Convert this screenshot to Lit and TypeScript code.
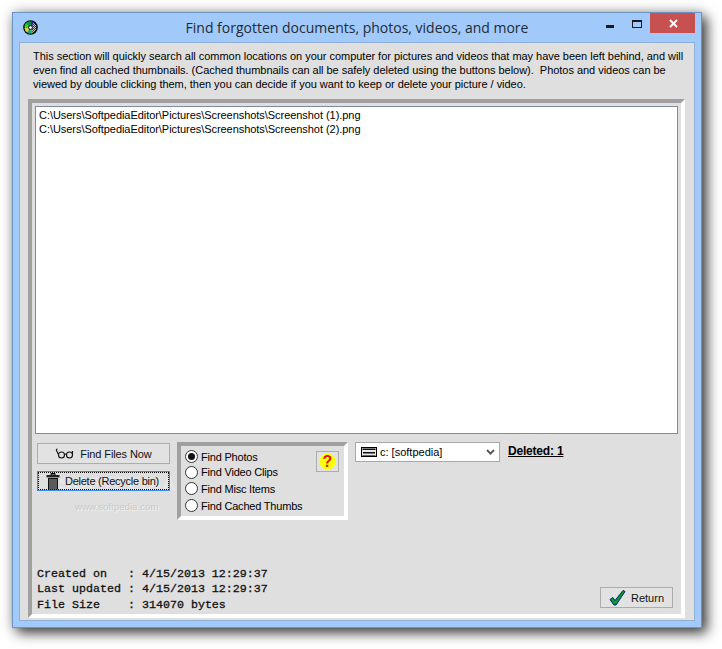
import { LitElement, html, css } from "lit";
import { customElement } from "lit/decorators.js";

const disc = html`<svg class="disc" width="15" height="15" viewBox="0 0 15 15">
  <defs><pattern id="gk" width="2" height="2" patternUnits="userSpaceOnUse">
    <rect width="2" height="2" fill="#c8c8c8"/><rect width="1" height="1" fill="#333"/><rect x="1" y="1" width="1" height="1" fill="#333"/>
  </pattern></defs>
  <circle cx="7.5" cy="7.5" r="6.6" fill="url(#gk)" stroke="#000" stroke-width="1.4"/>
  <path d="M7.5 7.5 L3 2.8 A6 6 0 0 1 8 1.5 Z" fill="#0c9a3c"/>
  <path d="M7.5 7.5 L8 1.5 A6 6 0 0 1 11 2.5 Z" fill="#1830b0"/>
  <path d="M7.5 7.5 L3 2.8 A6 6 0 0 0 1.5 7 Z" fill="#30d030"/>
  <path d="M7.5 7.5 L1.5 8 A6 6 0 0 0 4 12.5 Z" fill="#d8d820"/>
  <path d="M7.5 7.5 L4 12.5 A6 6 0 0 0 8 13.5 Z" fill="#10a890"/>
  <path d="M7.5 7.5 L8 13.5 A6 6 0 0 0 10 13 Z" fill="#30d030"/>
  <circle cx="7.5" cy="7.5" r="1.9" fill="#fff" stroke="#000"/>
</svg>`;

const glasses = html`<svg width="20" height="12" viewBox="0 0 20 12" fill="none" stroke="#111" stroke-width="1.1">
  <circle cx="6.5" cy="7" r="3"/><circle cx="14.5" cy="7" r="3"/>
  <path d="M9.5 6.5 Q10.5 5.5 11.5 6.5"/><path d="M3.5 6.5 L1.5 2.5 Q1 1 2.5 1"/>
  <path d="M17.5 6.5 L17.5 3"/>
</svg>`;

const trash = html`<svg width="14" height="18" viewBox="0 0 14 18">
  <path d="M5 1.5h4v1.5h-4z" fill="none" stroke="#000"/>
  <rect x="0.5" y="3" width="13" height="2.4" fill="#222"/>
  <path d="M2 6h10v11.5h-10z" fill="#111"/>
  <path d="M4 7v10M6 7v10M8 7v10M10 7v10" stroke="#ccc" stroke-width=".8"/>
</svg>`;

const check = html`<svg width="17" height="17" viewBox="0 0 17 17">
  <path d="M1 10.5 L3.8 8.5 L6 11.5 L14 1.5 L16 2.5 L7 16 L5 16 Z" fill="#0a9a28" stroke="#00207a" stroke-width="1"/>
</svg>`;

const drive = html`<svg width="16" height="10" viewBox="0 0 16 10">
  <rect x=".5" y=".5" width="15" height="9" fill="#e8e8e8" stroke="#000"/>
  <rect x="1.5" y="1.5" width="13" height="1.5" fill="#111"/>
  <rect x="2" y="5" width="12" height="1.5" fill="#111"/>
  <rect x="1.5" y="8" width="13" height="1" fill="#666"/>
</svg>`;

const chevron = html`<svg width="9" height="6" viewBox="0 0 9 6" fill="none" stroke="#555" stroke-width="1.8">
  <path d="M1 1 L4.5 4.6 L8 1"/>
</svg>`;

const help = html`<svg width="17" height="17" viewBox="0 0 17 17">
  <defs><pattern id="d" width="2" height="2" patternUnits="userSpaceOnUse">
    <rect width="2" height="2" fill="#ffff00"/><rect width="1" height="1" fill="#ffffa0"/>
  </pattern></defs>
  <circle cx="8.5" cy="8.5" r="8" fill="url(#d)"/>
</svg>`;

@customElement("app-root")
export class AppRoot extends LitElement {
  static styles = css`
    :host {
      display: block;
      width: 722px;
      height: 649px;
      background: #fff;
      overflow: hidden;
      font-family: "Liberation Sans", Arial, sans-serif;
      font-size: 11px;
      color: #000;
    }
    .page { padding: 12px 0 0 12px; }
    .window {
      box-sizing: border-box;
      width: 690px;
      height: 616px;
      background: #a1cafa;
      border: 1px solid #6c93c2;
      box-shadow: 5px 5px 12px rgba(0,0,0,.72), 0 0 12px rgba(0,0,0,.22);
      display: flex;
      flex-direction: column;
    }
    .titlebar {
      height: 28px;
      flex: none;
      display: grid;
      grid-template-columns: 1fr auto 1fr;
    }
    .disc { margin: 7px 0 0 10px; display: block; }
    .title {
      font-family: "Open Sans", sans-serif;
      font-size: 14px;
      line-height: 30px;
      color: #1d2a38;
      white-space: nowrap;
    }
    .controls { display: flex; justify-content: flex-end; padding-right: 6px; }
    .min { width: 8px; height: 3px; background: #1a1a1a; margin: 12px 18px 0 0; }
    .max {
      box-sizing: border-box; width: 10px; height: 8px;
      border: 1px solid #1a1a1a; border-top-width: 2px;
      margin: 7px 8px 0 0;
    }
    .close {
      box-sizing: border-box;
      width: 45px; height: 20px; background: #c75050; color: #fff;
      display: flex; align-items: center; justify-content: center;
      padding: 1px 0 0 1px;
    }
    .client {
      flex: 1;
      margin: 1px 6px 6px 6px;
      background: #dfdfdf;
      border: 1px solid #8fb0d6;
      display: flex;
      flex-direction: column;
      min-height: 0;
    }
    .intro {
      margin: 6px 0 8px 13px;
      line-height: 14px;
      white-space: pre;
      letter-spacing: -0.03px;
    }
    .frame {
      box-sizing: border-box;
      width: 657px;
      height: 519px;
      flex: none;
      margin-left: 8px;
      border: 4px solid;
      border-color: #a0a0a0 #fff #fff #a0a0a0;
      padding: 3px 3px 1px 3px;
      display: flex;
      flex-direction: column;
    }
    .list {
      box-sizing: border-box;
      flex: none;
      height: 328px;
      background: #fff;
      border: 1px solid #7f8a9c;
      padding: 1px 3px;
      line-height: 14px;
      white-space: nowrap;
      letter-spacing: -0.05px;
    }
    .row {
      flex: none;
      display: flex;
      align-items: flex-start;
      margin-top: 8px;
      padding-left: 2px;
    }
    .col {
      position: relative;
      width: 133px;
      margin: 1px 7px 0 0;
      display: flex;
      flex-direction: column;
      gap: 7px;
    }
    .btn {
      box-sizing: border-box;
      height: 21px;
      display: flex;
      align-items: center;
      justify-content: center;
      gap: 5px;
      background: #e2e2e2;
      border: 1px solid #acacac;
      color: #111;
      position: relative;
      z-index: 1;
      letter-spacing: -0.1px;
    }
    .btn.focus {
      height: 20px;
      border-color: #3b8ce0;
      outline: 1px dotted #000;
      outline-offset: -2px;
      background: transparent;
      gap: 5px;
      letter-spacing: -0.25px;
      padding-right: 2px;
    }
    .wm-big {
      position: absolute;
      left: 22px; top: 30px;
      font-size: 19px;
      font-weight: bold;
      color: #e6e6e6;
      letter-spacing: 1px;
      white-space: nowrap;
    }
    .wm-small {
      position: absolute;
      left: 38px; top: 58px;
      font-size: 9.7px;
      color: #c9c9c9;
      text-shadow: 1px 1px 0 #f2f2f2;
      white-space: nowrap;
    }
    .group {
      box-sizing: border-box;
      width: 171px;
      height: 78px;
      border: 4px solid;
      border-color: #a0a0a0 #fff #fff #a0a0a0;
      padding: 3px 0 0 4px;
      margin-right: 7px;
      display: flex;
      justify-content: space-between;
    }
    .radio {
      display: flex; align-items: center; gap: 3px;
      height: 17px; white-space: nowrap;
      letter-spacing: -0.2px;
    }
    .radio.first { height: 15px; }
    .radio.second { height: 16px; }
    .dot {
      box-sizing: border-box;
      width: 13px; height: 13px; border-radius: 50%;
      background: #fff; border: 1px solid #333;
      display: flex; align-items: center; justify-content: center;
    }
    .dot.on::after {
      content: ""; width: 7px; height: 7px; border-radius: 50%; background: #111;
    }
    .help {
      box-sizing: border-box;
      position: relative;
      width: 23px; height: 21px;
      margin: 2px 5px 0 0;
      background: #e2e2e2;
      border: 1px solid #acacac;
      display: flex; align-items: center; justify-content: center;
    }
    .q {
      position: absolute; inset: 0;
      display: flex; align-items: center; justify-content: center;
      color: #e01010; font-weight: bold; font-size: 16px;
    }
    .select {
      box-sizing: border-box;
      width: 145px; height: 20px;
      background: #fff;
      border: 1px solid #a9a9a9;
      display: flex; align-items: center;
      padding: 0 4px 0 5px;
      margin-right: 8px;
    }
    .select .v { margin-left: 3px; flex: 1; }
    .deleted {
      font-size: 12px; font-weight: bold; text-decoration: underline;
      line-height: 19px; white-space: nowrap;
      letter-spacing: -0.2px;
    }
    .bottom {
      flex: 1;
      display: flex;
      align-items: flex-end;
      justify-content: space-between;
      padding: 0 5px 0 2px;
    }
    .info {
      font-family: "Liberation Mono", "Courier New", monospace;
      font-size: 11.67px;
      -webkit-text-stroke: 0.3px #111;
      line-height: 15.5px;
      white-space: pre;
      color: #111;
    }
    .return {
      box-sizing: border-box;
      width: 73px;
      height: 21px;
      margin-bottom: 5px;
      letter-spacing: 0;
    }
  `;

  render() {
    return html`<div class="page"><div class="window">
      <div class="titlebar">
        <div>${disc}</div>
        <div class="title">Find forgotten documents, photos, videos, and more</div>
        <div class="controls">
          <div class="min"></div>
          <div class="max"></div>
          <div class="close"><svg width="9" height="9" viewBox="0 0 9 9" stroke="#fff" stroke-width="2"><path d="M1 1L8 8M8 1L1 8"/></svg></div>
        </div>
      </div>
      <div class="client">
        <div class="intro">This section will quickly search all common locations on your computer for pictures and videos that may have been left behind, and will
even find all cached thumbnails. (Cached thumbnails can all be safely deleted using the buttons below).  Photos and videos can be
viewed by double clicking them, then you can decide if you want to keep or delete your picture / video.</div>
        <div class="frame">
          <div class="list">
            <div>C:\\Users\\SoftpediaEditor\\Pictures\\Screenshots\\Screenshot (1).png</div>
            <div>C:\\Users\\SoftpediaEditor\\Pictures\\Screenshots\\Screenshot (2).png</div>
          </div>
          <div class="row">
            <div class="col">
              <div class="wm-big">SOFTPEDIA</div>
              <div class="wm-small">www.softpedia.com</div>
              <div class="btn">${glasses}<span>Find Files Now</span></div>
              <div class="btn focus">${trash}<span>Delete (Recycle bin)</span></div>
            </div>
            <div class="group">
              <div>
                <div class="radio first"><span class="dot on"></span>Find Photos</div>
                <div class="radio second"><span class="dot"></span>Find Video Clips</div>
                <div class="radio"><span class="dot"></span>Find Misc Items</div>
                <div class="radio"><span class="dot"></span>Find Cached Thumbs</div>
              </div>
              <div class="help">${help}<span class="q">?</span></div>
            </div>
            <div class="select">${drive}<span class="v">c: [softpedia]</span>${chevron}</div>
            <div class="deleted">Deleted: 1</div>
          </div>
          <div class="bottom">
            <div class="info">Created on   : 4/15/2013 12:29:37
Last updated : 4/15/2013 12:29:37
File Size    : 314070 bytes</div>
            <div class="btn return">${check}<span>Return</span></div>
          </div>
        </div>
      </div>
    </div></div>`;
  }
}
